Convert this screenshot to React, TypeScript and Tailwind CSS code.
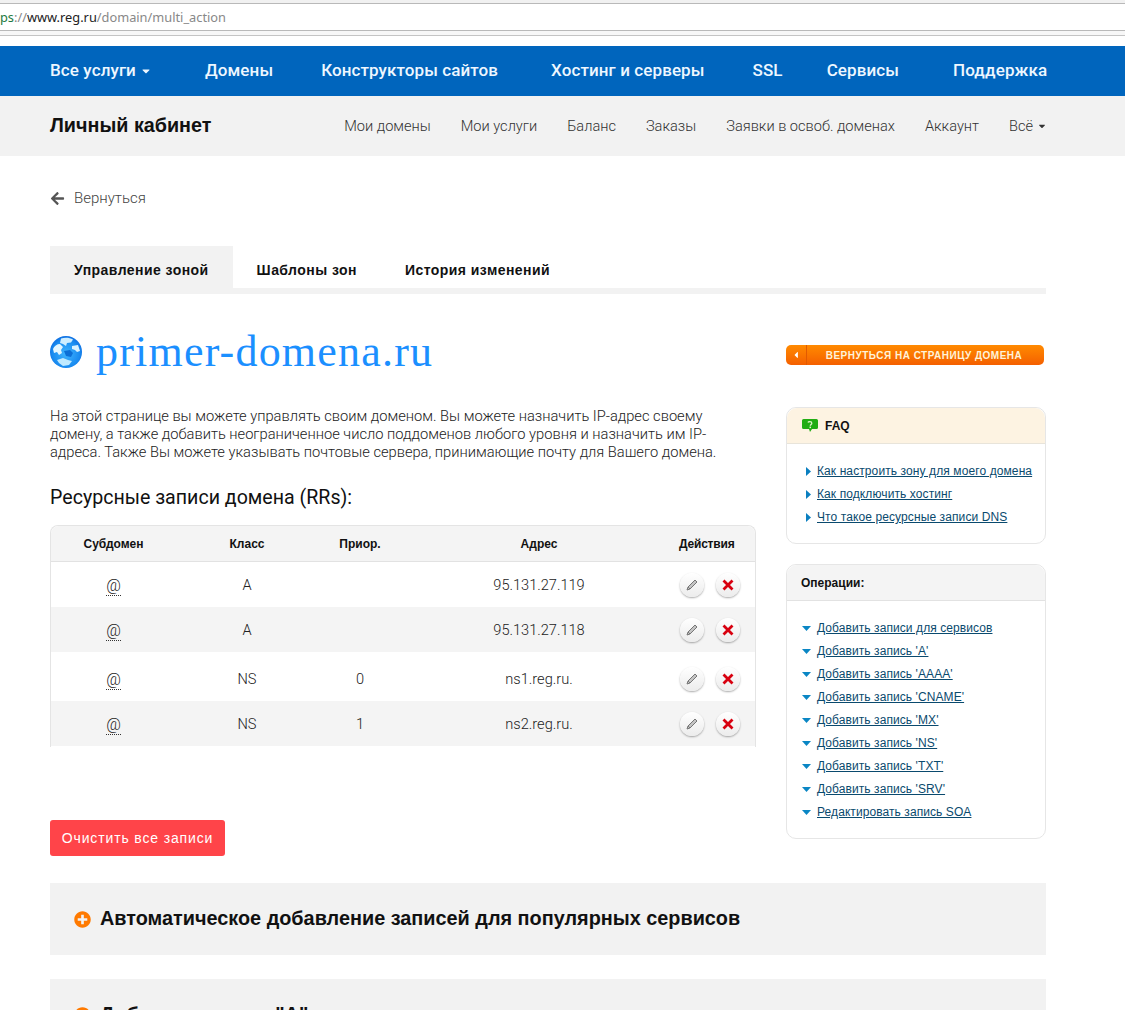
import React from 'react';
import { FaArrowLeft, FaPlusCircle, FaCaretDown, FaCaretLeft } from 'react-icons/fa';

const mainNav = [
  { label: 'Домены', ml: 'ml-[54px]' },
  { label: 'Конструкторы сайтов', ml: 'ml-[48px]' },
  { label: 'Хостинг и серверы', ml: 'ml-[53px]' },
  { label: 'SSL', ml: 'ml-[48px]' },
  { label: 'Сервисы', ml: 'ml-[44px]' },
  { label: 'Поддержка', ml: 'ml-[54px]' },
];
const subNav = ['Мои домены', 'Мои услуги', 'Баланс', 'Заказы', 'Заявки в освоб. доменах', 'Аккаунт'];

const records = [
  { type: 'A', prio: '', addr: '95.131.27.119', h: 'h-[45px] pt-[2px]', bg: 'bg-white' },
  { type: 'A', prio: '', addr: '95.131.27.118', h: 'h-[45px] pt-[2px]', bg: 'bg-[#f4f4f4]' },
  { type: 'NS', prio: '0', addr: 'ns1.reg.ru.', h: 'h-[49px] pt-[6px]', bg: 'bg-white' },
  { type: 'NS', prio: '1', addr: 'ns2.reg.ru.', h: 'h-[45px] pt-[2px]', bg: 'bg-[#f4f4f4]' },
];

const faqLinks = ['Как настроить зону для моего домена', 'Как подключить хостинг', 'Что такое ресурсные записи DNS'];
const opLinks = [
  'Добавить записи для сервисов',
  "Добавить запись 'A'",
  "Добавить запись 'AAAA'",
  "Добавить запись 'CNAME'",
  "Добавить запись 'MX'",
  "Добавить запись 'NS'",
  "Добавить запись 'TXT'",
  "Добавить запись 'SRV'",
  'Редактировать запись SOA',
];

const Globe = () => (
  <svg width="32" height="32" viewBox="0 0 32 32" className="shrink-0">
    <defs>
      <radialGradient id="globe" cx="50%" cy="55%" r="60%">
        <stop offset="0%" stopColor="#3fb4ff" />
        <stop offset="70%" stopColor="#1a8cf0" />
        <stop offset="100%" stopColor="#0a63dc" />
      </radialGradient>
    </defs>
    <circle cx="16" cy="16" r="16" fill="url(#globe)" />
    <path d="M11 2.500c4-1.500 9-1 12 1l-2 3-4 .5-1 3-3-2-3-1z" fill="#cfeeff" />
    <path d="M3 13c1-3 4-5 7-5l3 3-2 3 1 3-3 2-2-3-3 1z" fill="#e4f6ff" />
    <path d="M22 10l6-1 2 6-3 1-2-2-3-1z" fill="#d9f2ff" />
    <path d="M7 24l6-2 5 2 4 1-3 4-6 1-4-3z" fill="#bfeaff" />
    <path d="M14 15l6-1 3 3-2 4-5-1z" fill="#0c6fd6" />
  </svg>
);

const FaqIcon = () => (
  <svg width="16" height="14" viewBox="0 0 16 14" className="shrink-0">
    <path d="M1.5 0h13A1.5 1.5 0 0 1 16 1.5v7a1.5 1.5 0 0 1-1.500 1.500H10l-2 3-1-3H1.500A1.500 1.500 0 0 1 0 8.500v-7A1.500 1.500 0 0 1 1.500 0z" fill="#22ad14" />
    <path d="M6 3.500c.3-1 3.800-1.300 3.800.7 0 1.300-1.500 1.300-1.500 2.600" fill="none" stroke="#dff5c8" strokeWidth="1.300" />
    <rect x="7.500" y="7.600" width="1.500" height="1.500" fill="#dff5c8" />
  </svg>
);

const RightArrow = () => (
  <svg width="5" height="9" viewBox="0 0 5 9" className="shrink-0">
    <path d="M0 0l5 4.500L0 9z" fill="#0a7fc0" />
  </svg>
);

const DownArrow = () => (
  <svg width="9" height="5" viewBox="0 0 9 5" className="shrink-0">
    <path d="M0 0h9L4.500 5z" fill="#0a86c4" />
  </svg>
);

const PencilIcon = () => (
  <svg width="12" height="12" viewBox="0 0 12 12">
    <path d="M9 1l2 2-7 7-3 1 1-3z" fill="#c4c4c4" stroke="#777" strokeWidth="1" strokeLinejoin="round" />
    <path d="M2 8l2 2" stroke="#777" strokeWidth="1" />
  </svg>
);

const CrossIcon = () => (
  <svg width="12" height="12" viewBox="0 0 12 12">
    <path d="M1.500 1.500l9 9M10.500 1.500l-9 9" stroke="#d8000f" strokeWidth="2.800" />
  </svg>
);

const RoundButton = ({ children }: { children: React.ReactNode }) => (
  <button className="flex h-6 w-6 items-center justify-center rounded-full bg-gradient-to-b from-white to-[#ececec] shadow-[0_1px_2px_rgba(0,0,0,0.35)]">
    {children}
  </button>
);

export default function App() {
  return (
    <div className="h-[1010px] w-[1125px] overflow-hidden bg-white font-['Liberation_Sans',Arial,sans-serif] text-[#222]">
      {/* browser address bar */}
      <div className="h-[3px] bg-[#f1f1f1]" />
      <div className="flex h-[28px] items-center border-y border-[#b9b9b9] bg-white pt-[1px] font-['Noto_Sans',sans-serif] text-[12.8px] text-[#888]">
        <span className="text-[#1c7a3e]">ps</span>
        <span>://</span>
        <span className="text-[#222]">www.reg.ru</span>
        <span>/domain/multi_action</span>
      </div>
      <div className="h-[5px] border-b border-[#c4c4c4] bg-[#f7f7f7]" />

      {/* main nav */}
      <div className="mt-[10px] flex h-[50px] items-center bg-[#0065bd] pl-[50px] font-['Roboto',sans-serif] text-[17px] font-medium tracking-[0.1px] text-[#eef7ff]">
        <span className="flex items-center gap-[5px]">
          Все услуги
          <FaCaretDown className="h-[12px] w-[10px]" />
        </span>
        {mainNav.map((item) => (
          <span key={item.label} className={item.ml}>{item.label}</span>
        ))}
      </div>

      {/* cabinet nav */}
      <div className="flex h-[60px] items-center justify-between bg-[#f2f2f2] pl-[50px] pr-[79px]">
        <span className="text-[19.75px] font-bold text-[#111]">Личный кабинет</span>
        <div className="flex items-center gap-[30px] pt-[1px] font-['Roboto',sans-serif] text-[14.6px] font-light text-[#333]">
          {subNav.map((item) => (
            <span key={item}>{item}</span>
          ))}
          <span className="flex items-center gap-[5px]">
            Всё
            <FaCaretDown className="h-[10px] w-[8px]" />
          </span>
        </div>
      </div>

      <div className="w-[996px] ml-[50px]">
        {/* back link */}
        <div className="mt-[33px] flex h-[18px] items-center gap-[9px] font-['Roboto',sans-serif] text-[15px] font-light text-[#444]">
          <FaArrowLeft className="h-[15px] w-[15px] text-[#555]" />
          Вернуться
        </div>

        {/* tabs */}
        <div className="mt-[39px] flex h-[48px] border-b-[6px] border-[#f2f2f2] text-[14px] font-bold tracking-[0.45px] text-[#111]">
          <div className="flex items-center bg-[#f2f2f2] px-[24px] pt-[6px]">Управление зоной</div>
          <div className="flex items-center px-[24px] pt-[6px]">Шаблоны зон</div>
          <div className="flex items-center px-[24px] pt-[6px]">История изменений</div>
        </div>

        <div className="flex gap-[30px]">
          {/* left column */}
          <div className="w-[706px]">
            <div className="mt-[35px] flex h-[46px] items-center gap-[14px]">
              <Globe />
              <h1 className="font-['Liberation_Serif',serif] text-[44px] leading-none tracking-[1.2px] text-[#1b8fff]">primer-domena.ru</h1>
            </div>
            <p className="mt-[32px] w-[680px] font-['Roboto',sans-serif] text-[14.68px] font-light leading-[18px] text-[#222]">
              На этой странице вы можете управлять своим доменом. Вы можете назначить IP-адрес своему домену, а также
              добавить неограниченное число поддоменов любого уровня и назначить им IP-адреса. Также Вы можете указывать
              почтовые сервера, принимающие почту для Вашего домена.
            </p>
            <h2 className="mt-[25px] font-['Roboto',sans-serif] text-[19.6px] leading-[24px] text-[#111]">Ресурсные записи домена (RRs):</h2>

            {/* records table */}
            <div className="mt-[15px] rounded-t-[8px] border-x border-t border-[#e4e4e4] pb-[1px]">
              <div className="grid h-[36px] grid-cols-[125px_142px_84px_274px_79px] items-center rounded-t-[8px] border-b border-[#e2e2e2] bg-[#f4f4f4] text-center text-[12px] font-bold text-[#111]">
                <span>Субдомен</span>
                <span>Класс</span>
                <span>Приор.</span>
                <span>Адрес</span>
                <span className="pl-[3px] text-left tracking-[-0.2px]">Действия</span>
              </div>
              {records.map((r) => (
                <div key={r.addr} className={`grid grid-cols-[125px_142px_84px_274px_79px] items-center text-center font-['Roboto',sans-serif] text-[14.6px] font-light text-[#222] ${r.h} ${r.bg}`}>
                  <span>
                    <span className="border-b border-dotted border-[#333] text-[16px]">@</span>
                  </span>
                  <span>{r.type}</span>
                  <span>{r.prio}</span>
                  <span>{r.addr}</span>
                  <div className="-mt-[2px] flex items-center gap-[12px] pl-[4px]">
                    <RoundButton>
                      <PencilIcon />
                    </RoundButton>
                    <RoundButton>
                      <CrossIcon />
                    </RoundButton>
                  </div>
                </div>
              ))}
            </div>

            <button className="mt-[73px] flex h-[36px] w-[175px] items-center justify-center rounded-[3px] bg-[#ff4449] text-[14px] tracking-[0.85px] text-white">
              Очистить все записи
            </button>
          </div>

          {/* sidebar */}
          <div className="w-[260px]">
            <button className="mt-[51px] flex h-[20px] w-[258px] items-center rounded-[5px] bg-gradient-to-b from-[#ff8a00] to-[#f45f00] text-[10px] font-bold tracking-[0.5px] text-[#fff3d8]">
              <span className="flex h-full w-[21px] items-center justify-center border-r border-[#e25a00]">
                <FaCaretLeft className="h-[10px] w-[8px] text-white" />
              </span>
              <span className="flex-1 pr-[3px] text-center">ВЕРНУТЬСЯ НА СТРАНИЦУ ДОМЕНА</span>
            </button>

            <div className="mt-[42px] rounded-[10px] border border-[#e6e6e6]">
              <div className="flex h-[36px] items-center gap-[7px] rounded-t-[10px] border-b border-[#e8e4da] bg-[#fdf3e2] pl-[15px] text-[12px] font-bold text-[#111]">
                <FaqIcon />
                FAQ
              </div>
              <div className="flex flex-col gap-[8px] pb-[18px] pl-[19px] pt-[20px] text-[12px] leading-[15px] tracking-[0.1px] text-[#0a4a6e]">
                {faqLinks.map((link) => (
                  <div key={link} className="flex items-center gap-[6px]">
                    <RightArrow />
                    <span className="underline">{link}</span>
                  </div>
                ))}
              </div>
            </div>

            <div className="mt-[20px] rounded-[10px] border border-[#e6e6e6]">
              <div className="flex h-[36px] items-center rounded-t-[10px] border-b border-[#e2e2e2] bg-[#f4f4f4] pl-[14px] text-[12px] font-bold text-[#111]">
                Операции:
              </div>
              <div className="flex flex-col gap-[8px] pb-[18px] pl-[15px] pt-[20px] text-[12px] leading-[15px] tracking-[0.08px] text-[#0a4a6e]">
                {opLinks.map((link) => (
                  <div key={link} className="flex items-center gap-[6px]">
                    <DownArrow />
                    <span className="underline">{link}</span>
                  </div>
                ))}
              </div>
            </div>
          </div>
        </div>

        {/* accordions */}
        <div className="mt-[27px] flex h-[72px] items-center gap-[9px] bg-[#f2f2f2] pl-[24px] text-[19.85px] font-bold text-[#111]">
          <FaPlusCircle className="h-[17px] w-[17px] text-[#ff7a00]" />
          Автоматическое добавление записей для популярных сервисов
        </div>
        <div className="mt-[24px] flex h-[72px] items-center gap-[9px] bg-[#f2f2f2] pl-[24px] text-[19.85px] font-bold text-[#111]">
          <FaPlusCircle className="h-[17px] w-[17px] text-[#ff7a00]" />
          Добавить запись "A"
        </div>
      </div>
    </div>
  );
}
